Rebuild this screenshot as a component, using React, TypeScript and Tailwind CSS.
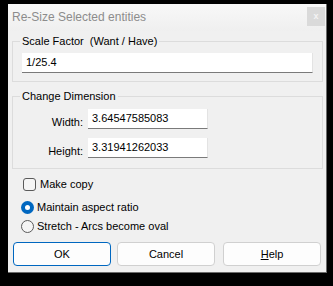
import React from 'react';

const font = { fontFamily: '"Liberation Sans", Arial, sans-serif' };

const Field: React.FC<{ value: string; className?: string }> = ({ value, className }) => (
  <div
    className={`h-[20px] bg-white border-b border-b-[#7a7a7a] border-r border-r-[#e3e3e3] pl-[4px] pt-[2px] text-[11px] leading-[14px] text-black ${className ?? ''}`}
  >
    {value}
  </div>
);

const Group: React.FC<{ title: string; className?: string; children: React.ReactNode }> = ({ title, className, children }) => (
  <fieldset className={`border border-[#dcdcdc] mx-[4px] mr-[3px] ${className ?? ''}`}>
    <legend className="ml-[7px] px-[2px] text-[11px] leading-[13px] text-black whitespace-pre">{title}</legend>
    {children}
  </fieldset>
);

export default function App() {
  return (
    <div className="w-[333px] h-[286px] bg-black pt-[4px] pl-[8px]" style={font}>
      <div className="w-[319px] h-[269px] bg-[#f0f0f0] border-r border-b border-[#6b6b6b] flex flex-col">
        {/* Title bar */}
        <div className="h-[27px] flex items-start justify-between bg-gradient-to-b from-[#f8f8f8] to-[#efefef]">
          <span className="mt-[5px] ml-[4px] text-[12px] leading-[16px] text-[#8c8c8c]">Re-Size Selected entities</span>
          <div className="mt-[3px] mr-[1px] w-[18px] h-[19px] bg-[#dadada] flex items-center justify-center text-[9px] leading-none text-[#f4f4f4] font-bold">
            x
          </div>
        </div>

        <Group title="Scale Factor  (Want / Have)" className="mt-[4px] pb-[8px] pt-[5px]">
          <Field value="1/25.4" className="mx-[9px] h-[19px]" />
        </Group>

        <Group title="Change Dimension" className="mt-[8px] pt-[6px] pb-[10px]">
          <div className="flex flex-col gap-[9px]">
            <div className="flex items-center">
              <span className="w-[70px] text-right text-[11px] leading-[13px] pt-[6px]">Width:</span>
              <Field value="3.64547585083" className="ml-[5px] w-[120px]" />
            </div>
            <div className="flex items-center">
              <span className="w-[70px] text-right text-[11px] leading-[13px] pt-[6px]">Height:</span>
              <Field value="3.31941262033" className="ml-[5px] w-[120px] h-[19px]" />
            </div>
          </div>
        </Group>

        <div className="mt-[8px] ml-[15px] flex items-center gap-[4px] text-[11px] leading-[14px]">
          <span className="w-[13px] h-[13px] rounded-[3px] border border-[#5a5a5a] bg-[#f5f5f5]" />
          <span>Make copy</span>
        </div>

        <div className="mt-[10px] ml-[13px] flex flex-col gap-[6px] text-[11px] leading-[13px]">
          <div className="flex items-center gap-[3px]">
            <span className="w-[13px] h-[13px] rounded-full bg-[#0067c0] flex items-center justify-center">
              <span className="w-[5px] h-[5px] rounded-full bg-white" />
            </span>
            <span>Maintain aspect ratio</span>
          </div>
          <div className="flex items-center gap-[3px]">
            <span className="w-[13px] h-[13px] rounded-full border border-[#5a5a5a] bg-[#f5f5f5]" />
            <span>Stretch - Arcs become oval</span>
          </div>
        </div>

        <div className="mt-[9px] ml-[5px] flex text-[11px]">
          <button className="w-[98px] h-[24px] rounded-[4px] border border-[#0067c0] bg-[#fdfdfd] text-black">OK</button>
          <button className="ml-[6px] w-[98px] h-[24px] rounded-[4px] border border-[#d0d0d0] bg-[#fdfdfd] text-black">Cancel</button>
          <button className="ml-[8px] w-[98px] h-[24px] rounded-[4px] border border-[#d0d0d0] bg-[#fdfdfd] text-black">
            <span className="underline">H</span>elp
          </button>
        </div>
      </div>
    </div>
  );
}
